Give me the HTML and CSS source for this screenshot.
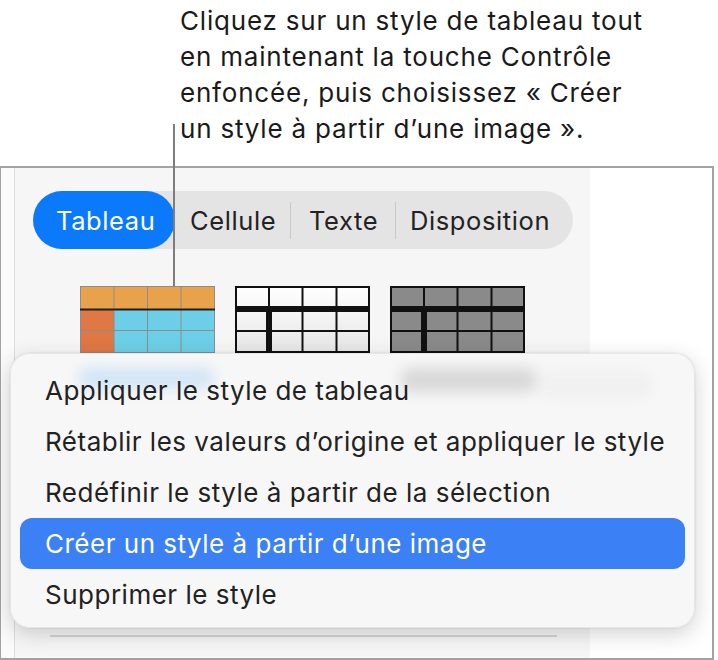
FILE: index.html
```html
<!DOCTYPE html>
<html lang="fr">
<head>
<meta charset="utf-8">
<link rel="stylesheet" href="styles.css">
</head>
<body>
<div class="page">
  <p class="callout">Cliquez sur un style de tableau tout<br>en maintenant la touche Contrôle<br>enfoncée, puis choisissez « Créer<br>un style à partir d’une image ».</p>
  <div class="frame">
    <div class="gutter"></div>
    <div class="panel">
      <div class="tabs">
        <span class="tab tab-active">Tableau</span>
        <span class="tab tab-cell">Cellule</span>
        <span class="sep"></span>
        <span class="tab tab-text">Texte</span>
        <span class="sep"></span>
        <span class="tab tab-layout">Disposition</span>
      </div>
      <div class="thumbs">
        <svg class="thumb" width="135" height="67" viewBox="0 0 135 67">
          <rect x="0" y="0" width="135" height="23" fill="#e9a24c"/>
          <rect x="0" y="23" width="34" height="44" fill="#df7844"/>
          <rect x="34" y="23" width="101" height="44" fill="#6dcfe7"/>
          <g stroke="#8c8c8c" stroke-width="1">
            <line x1="34" y1="0" x2="34" y2="67"/>
            <line x1="67.5" y1="0" x2="67.5" y2="67"/>
            <line x1="101" y1="0" x2="101" y2="67"/>
            <line x1="0" y1="44.5" x2="135" y2="44.5"/>
            <rect x="0.5" y="0.5" width="134" height="66" fill="none"/>
          </g>
          <rect x="0" y="22.5" width="135" height="2" fill="#1e1e1e"/>
        </svg>
        <svg class="thumb" width="135" height="67" viewBox="0 0 135 67">
          <defs>
            <linearGradient id="wg" x1="0" y1="0" x2="0" y2="1">
              <stop offset="0" stop-color="#ffffff"/>
              <stop offset="1" stop-color="#e6e6e6"/>
            </linearGradient>
          </defs>
          <rect x="0" y="0" width="135" height="67" fill="url(#wg)"/>
          <g fill="#111">
            <rect x="0" y="0" width="135" height="2"/>
            <rect x="0" y="65" width="135" height="2"/>
            <rect x="0" y="0" width="2" height="67"/>
            <rect x="133" y="0" width="2" height="67"/>
            <rect x="33" y="0" width="2" height="67"/>
            <rect x="66.5" y="0" width="2" height="67"/>
            <rect x="100.5" y="0" width="2" height="67"/>
            <rect x="0" y="20" width="135" height="6"/>
            <rect x="0" y="44" width="135" height="2"/>
            <rect x="31" y="20" width="6" height="47"/>
          </g>
        </svg>
        <svg class="thumb" width="135" height="67" viewBox="0 0 135 67">
          <rect x="0" y="0" width="135" height="67" fill="#8a8a8a"/>
          <g fill="#111">
            <rect x="0" y="0" width="135" height="2"/>
            <rect x="0" y="65" width="135" height="2"/>
            <rect x="0" y="0" width="2" height="67"/>
            <rect x="133" y="0" width="2" height="67"/>
            <rect x="33" y="0" width="2" height="67"/>
            <rect x="66.5" y="0" width="2" height="67"/>
            <rect x="100.5" y="0" width="2" height="67"/>
            <rect x="0" y="20" width="135" height="6"/>
            <rect x="0" y="44" width="135" height="2"/>
            <rect x="31" y="20" width="6" height="47"/>
          </g>
        </svg>
      </div>
      <div class="rule"></div>
    </div>
    <div class="canvas"></div>
  </div>
  <div class="leader"></div>
  <div class="menu">
    <div class="blur blur-blue"></div>
    <div class="blur blur-gray"></div>
    <div class="blur blur-gray2"></div>
    <ul class="menu-list">
      <li class="item">Appliquer le style de tableau</li>
      <li class="item">Rétablir les valeurs d’origine et appliquer le style</li>
      <li class="item">Redéfinir le style à partir de la sélection</li>
      <li class="item item-active">Créer un style à partir d’une image</li>
      <li class="item">Supprimer le style</li>
    </ul>
  </div>
</div>
</body>
</html>
```

FILE: styles.css
```css
html, body {
  margin: 0;
  padding: 0;
  background: #ffffff;
}

body {
  font-family: Inter, "Noto Sans", "Liberation Sans", sans-serif;
  color: #1c1c1c;
}

.page {
  position: relative;
  width: 718px;
  height: 660px;
  overflow: hidden;
}

.callout {
  margin: 0;
  box-sizing: border-box;
  height: 166px;
  padding: 3px 0 0 180px;
  font-size: 26px;
  line-height: 36px;
  letter-spacing: 0.8px;
  color: #1a1a1a;
}

.frame {
  display: flex;
  width: 714px;
  height: 494px;
  box-sizing: border-box;
  border: 2px solid #a3a3a3;
  border-left-width: 1px;
  background: #ffffff;
}

.gutter {
  flex: 0 0 13px;
  background: #fbfbfb;
  border-right: 1px solid #dedede;
}

.panel {
  flex: 0 0 575px;
  background: #f6f6f6;
  padding: 23px 0 0 18px;
  box-sizing: border-box;
  display: flex;
  flex-direction: column;
  align-items: flex-start;
}

.canvas {
  flex: 1;
  background: #ffffff;
}

.tabs {
  display: flex;
  align-items: center;
  width: 540px;
  height: 58px;
  border-radius: 29px;
  background: #e4e4e4;
  font-size: 25.5px;
  letter-spacing: 0.6px;
  color: #222222;
}

.tab {
  display: flex;
  align-items: center;
  height: 100%;
  box-sizing: border-box;
}

.tab-active {
  width: 142px;
  padding-left: 23px;
  border-radius: 29px;
  background: #0b7afa;
  color: #ffffff;
}

.tab-cell {
  width: 115px;
  padding-left: 15px;
}

.tab-text {
  width: 104px;
  padding-left: 18px;
}

.tab-layout {
  flex: 1;
  padding-left: 14px;
}

.sep {
  width: 1px;
  height: 37px;
  background: #c9c9c9;
}

.thumbs {
  display: flex;
  gap: 20px;
  margin: 37px 0 0 47px;
}

.thumb {
  display: block;
}

.rule {
  margin: 282px 0 0 17px;
  width: 507px;
  height: 2px;
  background: #d4d4d4;
}

.leader {
  position: absolute;
  left: 173px;
  top: 124px;
  width: 2px;
  height: 162px;
  background: #7d7d7d;
}

.menu {
  position: absolute;
  left: 10px;
  top: 353px;
  width: 685px;
  height: 275px;
  box-sizing: border-box;
  border-radius: 20px;
  background: rgba(247, 247, 247, 0.97);
  border: 1px solid rgba(0, 0, 0, 0.07);
  box-shadow: 0 6px 22px rgba(0, 0, 0, 0.18), 0 0 2px rgba(0, 0, 0, 0.12);
  overflow: hidden;
}

.blur {
  position: absolute;
  filter: blur(7px);
  border-radius: 8px;
}

.blur-blue {
  left: 68px;
  top: 14px;
  width: 135px;
  height: 20px;
  background: rgba(150, 200, 245, 0.4);
}

.blur-gray {
  left: 390px;
  top: 14px;
  width: 135px;
  height: 24px;
  background: rgba(170, 170, 170, 0.4);
}

.blur-gray2 {
  left: 530px;
  top: 18px;
  width: 110px;
  height: 26px;
  background: rgba(200, 200, 200, 0.15);
}

.menu-list {
  position: relative;
  list-style: none;
  margin: 0;
  padding: 11px 0 0 0;
}

.item {
  height: 51px;
  line-height: 51px;
  margin: 0 9px;
  padding-left: 25px;
  border-radius: 12px;
  font-size: 26px;
  letter-spacing: 0.5px;
  color: #222222;
  white-space: nowrap;
}

.item-active {
  background: #3c80f6;
  color: #ffffff;
}
```
